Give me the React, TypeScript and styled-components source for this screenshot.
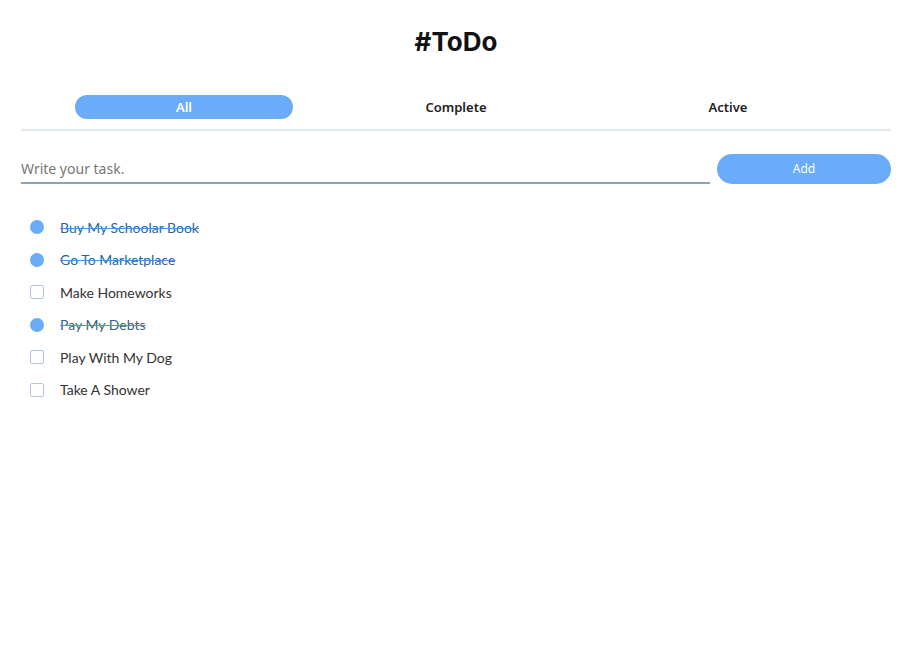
import React, { useState } from "react";
import styled, { createGlobalStyle } from "styled-components";

const Global = createGlobalStyle`
  html, body { margin: 0; padding: 0; background: #fff; }
  body { font-family: Lato, "Noto Sans", sans-serif; color: #222; }
`;

const Page = styled.div`
  padding: 0 16px 0 21px;
  display: flex;
  flex-direction: column;
`;

const Title = styled.h1`
  margin: 24px 0 0;
  height: 36px;
  text-align: center;
  font-family: Inter, "Liberation Sans", sans-serif;
  font-weight: 700;
  font-size: 26px;
  line-height: 36px;
  color: #111;
`;

const Tabs = styled.div`
  margin-top: 35px;
  padding: 0 27px 10px;
  display: grid;
  grid-template-columns: repeat(3, 1fr);
  border-bottom: 2px solid #e1eaee;
`;

const Tab = styled.button<{ $active?: boolean }>`
  justify-self: center;
  width: 80%;
  height: 24px;
  border: none;
  border-radius: 12px;
  background: ${(p) => (p.$active ? "#6aabfa" : "transparent")};
  color: ${(p) => (p.$active ? "#fff" : "#222")};
  font-family: "Noto Sans", sans-serif;
  font-size: 13px;
  font-weight: 600;
  cursor: pointer;
  padding: 0;
`;

const Form = styled.div`
  margin-top: 22px;
  display: flex;
  align-items: center;
  gap: 7px;
`;

const Input = styled.input`
  flex: 1;
  height: 28px;
  border: none;
  border-bottom: 2px solid #8ea4b6;
  outline: none;
  padding: 0;
  margin-top: 1px;
  font-family: "Noto Sans", sans-serif;
  font-size: 14px;
  color: #333;
  &::placeholder { color: #777; }
`;

const AddButton = styled.button`
  width: 174px;
  height: 30px;
  border: none;
  border-radius: 15px;
  background: #6aabfa;
  color: #fff;
  font-family: "Noto Sans", sans-serif;
  font-size: 12px;
  cursor: pointer;
`;

const List = styled.ul`
  list-style: none;
  margin: 33px 0 0;
  padding: 0 0 0 9px;
  display: flex;
  flex-direction: column;
  gap: 12px;
`;

const Item = styled.li`
  display: flex;
  align-items: center;
  gap: 16px;
  height: 20.5px;
`;

const Check = styled.span<{ $done?: boolean }>`
  box-sizing: border-box;
  width: 14px;
  height: 14px;
  flex: none;
  border-radius: ${(p) => (p.$done ? "50%" : "2px")};
  background: ${(p) => (p.$done ? "#6aabfa" : "#fff")};
  border: ${(p) => (p.$done ? "none" : "1.5px solid #b6c6de")};
`;

const Label = styled.span<{ $done?: boolean }>`
  font-family: Lato, "Noto Sans", sans-serif;
  font-size: 14px;
  color: ${(p) => (p.$done ? "#3a5f8c" : "#333")};
  text-decoration: ${(p) => (p.$done ? "line-through" : "none")};
  text-decoration-color: #4f8ee0;
`;

const tasks = [
  { text: "Buy My Schoolar Book", done: true },
  { text: "Go To Marketplace", done: true },
  { text: "Make Homeworks", done: false },
  { text: "Pay My Debts", done: true },
  { text: "Play With My Dog", done: false },
  { text: "Take A Shower", done: false },
];

export default function App() {
  const [tab, setTab] = useState("All");
  return (
    <>
      <Global />
      <Page>
        <Title>#ToDo</Title>
        <Tabs>
          {["All", "Complete", "Active"].map((t) => (
            <Tab key={t} $active={tab === t} onClick={() => setTab(t)}>
              {t}
            </Tab>
          ))}
        </Tabs>
        <Form>
          <Input placeholder="Write your task." />
          <AddButton>Add</AddButton>
        </Form>
        <List>
          {tasks.map((t) => (
            <Item key={t.text}>
              <Check $done={t.done} />
              <Label $done={t.done}>{t.text}</Label>
            </Item>
          ))}
        </List>
      </Page>
    </>
  );
}
